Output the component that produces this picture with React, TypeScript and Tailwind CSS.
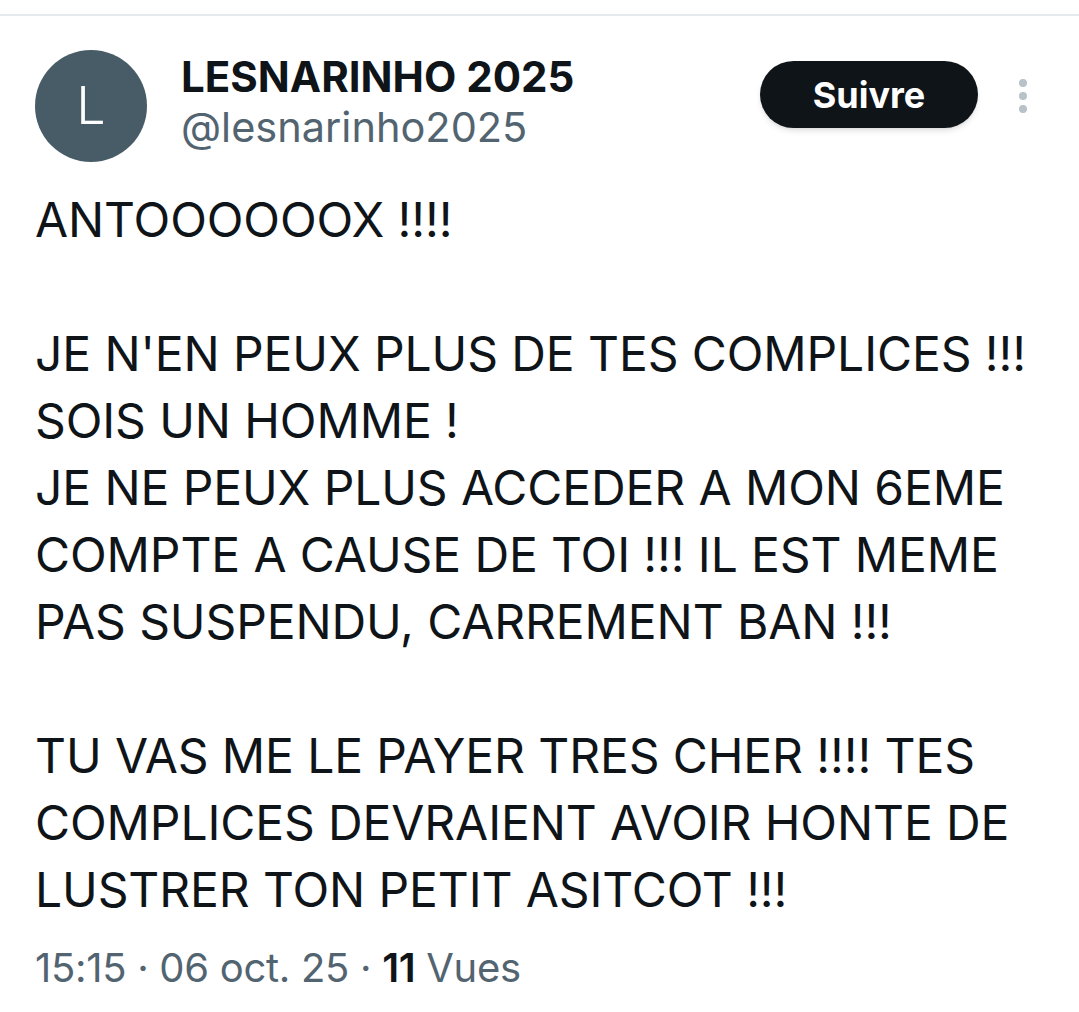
import React from "react";

export default function App() {
  const font = { fontFamily: "Inter, 'Noto Sans', sans-serif" };
  return (
    <div className="w-[1079px] h-[1012px] bg-white text-[#0f1419] overflow-hidden" style={font}>
      <div className="h-[16px] border-b-2 border-[#e6eaec]" />
      <div className="px-[35px] pt-[34px]">
        <div className="flex items-start">
          <div className="w-[112px] h-[112px] rounded-full bg-[#485c67] flex items-center justify-center text-white text-[52px] font-light shrink-0">
            L
          </div>
          <div className="ml-[34px] flex-1 pt-[3px]">
            <div className="text-[42px] font-bold leading-[48px]">LESNARINHO 2025</div>
            <div className="text-[41.5px] text-[#536471] leading-[52px]">@lesnarinho2025</div>
          </div>
          <div className="mt-[11px] h-[67px] w-[218px] rounded-full bg-[#0f1419] text-white flex items-center justify-center text-[36px] font-bold shadow-md">
            Suivre
          </div>
          <div className="ml-[41px] mr-[17px] mt-[29px] flex flex-col gap-[5px]">
            <div className="w-[8px] h-[8px] rounded-full bg-[#b8c2c9]" />
            <div className="w-[8px] h-[8px] rounded-full bg-[#b8c2c9]" />
            <div className="w-[8px] h-[8px] rounded-full bg-[#b8c2c9]" />
          </div>
        </div>
        <div className="mt-[24px] text-[48px] leading-[67px] whitespace-pre-line tracking-[-0.1px]">
          {"ANTOOOOOOX !!!!\n\nJE N'EN PEUX PLUS DE TES COMPLICES !!!\nSOIS UN HOMME !\nJE NE PEUX PLUS ACCEDER A MON 6EME\nCOMPTE A CAUSE DE TOI !!! IL EST MEME\nPAS SUSPENDU, CARREMENT BAN !!!\n\nTU VAS ME LE PAYER TRES CHER !!!! TES\nCOMPLICES DEVRAIENT AVOIR HONTE DE\nLUSTRER TON PETIT ASITCOT !!!"}
        </div>
        <div className="mt-[20px] text-[40px] text-[#536471] leading-[50px] tracking-[-0.3px]">
          15:15 · 06 oct. 25 · <span className="text-[#0f1419] font-semibold">11</span> Vues
        </div>
      </div>
    </div>
  );
}
